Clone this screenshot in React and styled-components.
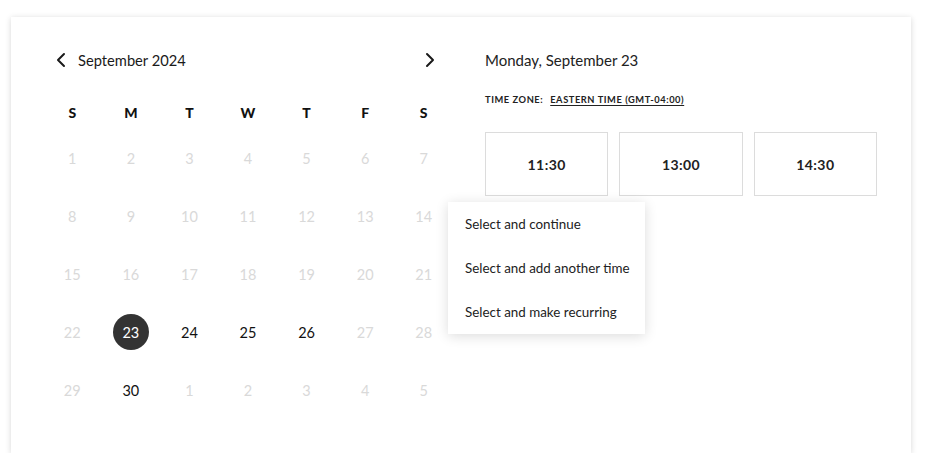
import React from 'react'
import styled, { createGlobalStyle } from 'styled-components'

const GlobalStyle = createGlobalStyle`
  body {
    margin: 0;
    background: #fff;
    font-family: "Lato", "Liberation Sans", sans-serif;
    color: #222;
  }
`

const Card = styled.div`
  position: relative;
  box-sizing: border-box;
  margin: 17px 0 0 11px;
  width: 900px;
  height: 436px;
  background: #fff;
  box-shadow: 0 1px 6px rgba(0, 0, 0, 0.16);
  display: flex;
  gap: 32px;
  padding: 32px 34px 0 32px;
`

const Calendar = styled.div`
  width: 410px;
  flex-shrink: 0;
`

const MonthBar = styled.div`
  height: 22px;
  display: flex;
  align-items: center;
  justify-content: space-between;
  padding: 0 18px 0 13px;
  margin-bottom: 24px;
`

const MonthLeft = styled.div`
  display: flex;
  align-items: center;
  gap: 12px;
`

const MonthTitle = styled.span`
  font-size: 14.7px;
  color: #1a1a1a;
`

const NavButton = styled.button`
  border: 0;
  background: none;
  padding: 0;
  width: 10px;
  height: 16px;
  display: flex;
  align-items: center;
  justify-content: center;
  cursor: pointer;
`

const Grid = styled.div`
  display: grid;
  grid-template-columns: repeat(7, 1fr);
  grid-auto-rows: ${p => p.$rowHeight || '58px'};
`

const Weekday = styled.div`
  height: 34px;
  display: flex;
  align-items: center;
  justify-content: center;
  font-size: 14px;
  font-weight: 900;
  color: #111;
`

const Day = styled.div`
  display: flex;
  align-items: center;
  justify-content: center;
  font-size: 14.5px;
  color: ${p => (p.$muted ? '#d9d9d9' : '#111')};
`

const Selected = styled.span`
  width: 36px;
  height: 36px;
  border-radius: 50%;
  background: #333;
  color: #fff;
  display: flex;
  align-items: center;
  justify-content: center;
`

const Side = styled.div`
  flex: 1;
`

const DateTitle = styled.div`
  height: 22px;
  display: flex;
  align-items: center;
  font-size: 15px;
  color: #222;
`

const ZoneRow = styled.div`
  margin-top: 23px;
  display: flex;
  align-items: center;
  gap: 7px;
  font-size: 9.3px;
  font-weight: 700;
  letter-spacing: 0.06em;
  text-transform: uppercase;
  color: #222;
`

const ZoneLink = styled.span`
  text-decoration: underline;
  text-underline-offset: 2px;
`

const Slots = styled.div`
  margin-top: 27px;
  display: grid;
  grid-template-columns: repeat(3, 1fr);
  gap: 11px;
`

const Slot = styled.button`
  height: 64px;
  border: 1px solid #dcdcdc;
  background: #fff;
  font-family: inherit;
  font-size: 14px;
  font-weight: 700;
  letter-spacing: 0.03em;
  color: #222;
`

const Menu = styled.div`
  position: absolute;
  left: 437px;
  top: 185px;
  width: 197px;
  background: #fff;
  box-shadow: 0 2px 12px rgba(0, 0, 0, 0.14);
`

const MenuItem = styled.div`
  height: 44px;
  display: flex;
  align-items: center;
  padding-left: 17px;
  padding-bottom: 1px;
  box-sizing: border-box;
  font-size: 13.4px;
  color: #222;
`

const Chevron = ({ dir }) => (
  <svg width="10" height="16" viewBox="0 0 10 16">
    <polyline
      points={dir === 'left' ? '8,2 2,8 8,14' : '2,2 8,8 2,14'}
      fill="none"
      stroke="#1a1a1a"
      strokeWidth="2"
      strokeLinecap="round"
      strokeLinejoin="round"
    />
  </svg>
)

const weekdays = ['S', 'M', 'T', 'W', 'T', 'F', 'S']
const active = [24, 25, 26, 30]

const days = []
for (let d = 1; d <= 30; d++) days.push({ n: d, cur: true })
for (let d = 1; d <= 5; d++) days.push({ n: d, cur: false })

const App = () => (
  <>
    <GlobalStyle />
    <Card>
      <Calendar>
        <MonthBar>
          <MonthLeft>
            <NavButton aria-label="Previous month"><Chevron dir="left" /></NavButton>
            <MonthTitle>September 2024</MonthTitle>
          </MonthLeft>
          <NavButton aria-label="Next month"><Chevron dir="right" /></NavButton>
        </MonthBar>
        <Grid $rowHeight="auto">
          {weekdays.map((w, i) => <Weekday key={i}>{w}</Weekday>)}
        </Grid>
        <Grid>
          {days.map((d, i) =>
            d.cur && d.n === 23 ? (
              <Day key={i}><Selected>23</Selected></Day>
            ) : (
              <Day key={i} $muted={!(d.cur && active.includes(d.n))}>{d.n}</Day>
            )
          )}
        </Grid>
      </Calendar>
      <Side>
        <DateTitle>Monday, September 23</DateTitle>
        <ZoneRow>
          <span>Time zone:</span>
          <ZoneLink>Eastern Time (GMT-04:00)</ZoneLink>
        </ZoneRow>
        <Slots>
          <Slot>11:30</Slot>
          <Slot>13:00</Slot>
          <Slot>14:30</Slot>
        </Slots>
      </Side>
      <Menu>
        <MenuItem>Select and continue</MenuItem>
        <MenuItem>Select and add another time</MenuItem>
        <MenuItem>Select and make recurring</MenuItem>
      </Menu>
    </Card>
  </>
)

export default App
